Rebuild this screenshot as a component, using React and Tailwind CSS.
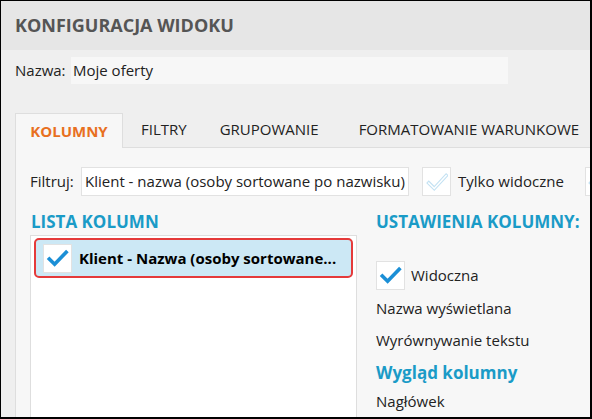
import React from 'react'

function Check({ light = false }) {
  if (light) {
    return (
      <svg width="22" height="22" viewBox="0 0 24 24" fill="none">
        <path d="M3 13 l6 6 L22 5" stroke="#c4e2f3" strokeWidth="4" strokeLinecap="square" />
        <path d="M3 13 l6 6 L22 5" stroke="#ffffff" strokeWidth="1.6" strokeLinecap="square" />
      </svg>
    )
  }
  return (
    <svg width="23" height="23" viewBox="0 0 24 24" fill="none">
      <path d="M3.5 12.5 l5.5 5.5 L21 5.5" stroke="#1b8fd6" strokeWidth="3.8" strokeLinecap="square" />
    </svg>
  )
}

function Box({ light, className = '' }) {
  return (
    <div className={`w-[29px] h-[29px] bg-white border border-[#e2e2e2] flex items-center justify-center shrink-0 ${className}`}>
      <Check light={light} />
    </div>
  )
}

export default function App() {
  const tabs = ['FILTRY', 'GRUPOWANIE', 'FORMATOWANIE WARUNKOWE']

  return (
    <div className="w-[592px] h-[419px] overflow-hidden border-t border-l border-r-2 border-b-2 border-black bg-[#efefef] font-['Open_Sans',sans-serif] text-[15px] text-[#222]">
      {/* header */}
      <div className="h-[49px] bg-[#e6e6e6] pl-[14px] flex items-center">
        <h1 className="text-[18px] font-bold text-[#555]">KONFIGURACJA WIDOKU</h1>
      </div>

      {/* name */}
      <div className="flex items-center pl-[14px] mt-[7px]">
        <span className="w-[56px] shrink-0">Nazwa:</span>
        <div className="w-[437px] h-[27px] shrink-0 bg-[#f7f7f7] flex items-center pl-[2px]">Moje oferty</div>
      </div>

      {/* tabs */}
      <div className="mt-[29px] ml-[14px] flex items-end h-[35px] border-b border-[#dedede]">
        <div className="h-[35px] w-[108px] shrink-0 bg-[#f7f7f7] border border-b-0 border-[#dedede] flex items-center justify-center text-[#e8701f] font-bold -mb-px">
          KOLUMNY
        </div>
        <div className="flex h-[35px] items-center whitespace-nowrap">
          <span className="ml-[18px]">{tabs[0]}</span>
          <span className="ml-[33px]">{tabs[1]}</span>
          <span className="ml-[40px]">{tabs[2]}</span>
        </div>
      </div>

      {/* content panel */}
      <div className="ml-[14px] h-[270px] bg-[#f7f7f7] border-l border-[#dedede] pl-[14px]">
        <div className="flex items-center pt-[19px] whitespace-nowrap">
          <span className="w-[51px] shrink-0">Filtruj:</span>
          <div className="w-[328px] h-[29px] shrink-0 bg-white border border-[#e2e2e2] flex items-center pl-[3px]">
            Klient - nazwa (osoby sortowane po nazwisku)
          </div>
          <Box light className="ml-[13px]" />
          <span className="ml-[7px] shrink-0">Tylko widoczne</span>
          <Box light className="ml-[21px]" />
        </div>

        <div className="flex mt-[16px]">
          {/* left column */}
          <div className="w-[327px] shrink-0">
            <h2 className="text-[17px] leading-[20px] font-bold text-[#1a9bc7] pl-px">LISTA KOLUMN</h2>
            <div className="mt-[3px] h-[200px] bg-white border border-[#dedede] pt-[2px] px-[3px]">
              <div className="h-[40px] rounded-[5px] border-2 border-[#e53a3a] bg-[#cce8f5] flex items-center pl-[7px]">
                <Box className="w-[28px] h-[28px]" />
                <span className="ml-[7px] font-bold text-black whitespace-nowrap">Klient - Nazwa (osoby sortowane...</span>
              </div>
            </div>
          </div>

          {/* right column */}
          <div className="pl-[19px] whitespace-nowrap">
            <h2 className="text-[17px] leading-[20px] font-bold text-[#1a9bc7]">USTAWIENIA KOLUMNY:</h2>
            <div className="flex items-center mt-[29px]">
              <Box />
              <span className="ml-[6px]">Widoczna</span>
            </div>
            <div className="mt-[8px] leading-[20px]">Nazwa wyświetlana</div>
            <div className="mt-[12px] leading-[20px]">Wyrównywanie tekstu</div>
            <div className="mt-[12px] leading-[22px] text-[17px] font-bold text-[#1a9bc7]">Wygląd kolumny</div>
            <div className="mt-[7px] leading-[20px]">Nagłówek</div>
          </div>
        </div>
      </div>
    </div>
  )
}
